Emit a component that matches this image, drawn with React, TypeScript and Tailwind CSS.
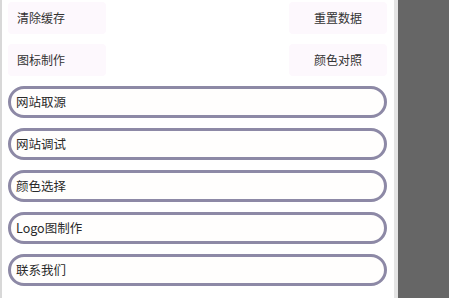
import React from "react";

const font = { fontFamily: '"Noto Sans CJK SC", "Noto Sans", sans-serif' };

function Btn({ label, left }: { label: string; left?: boolean }) {
  return (
    <div
      className={
        left
          ? "w-[98px] h-[32px] rounded-[4px] bg-[#fdf8fd] flex items-center justify-start pl-[9px] text-[12px] text-[#333]"
          : "w-[98px] h-[32px] rounded-[4px] bg-[#fdf8fd] flex items-center justify-center text-[12px] text-[#333]"
      }
    >
      {label}
    </div>
  );
}

function Pill({ label }: { label: string }) {
  return (
    <div className="h-[32px] rounded-full border-[3.5px] border-[#8d89a6] bg-[#fffefd] flex items-center pl-[5px] text-[12.5px] text-[#2a2a2a]">
      {label}
    </div>
  );
}

export default function App() {
  return (
    <div className="w-[449px] h-[298px] flex overflow-hidden bg-[#666666]" style={font}>
      <div className="w-[2px] bg-[#d8d8d8]" />
      <div className="w-[392px] bg-white pl-[6px] pr-[7px] pt-[2px] flex flex-col">
        <div className="flex justify-between">
          <Btn label="清除缓存" left />
          <Btn label="重置数据" />
        </div>
        <div className="flex justify-between mt-[10px]">
          <Btn label="图标制作" left />
          <Btn label="颜色对照" />
        </div>
        <div className="flex flex-col gap-[10px] mt-[10px]">
          <Pill label="网站取源" />
          <Pill label="网站调试" />
          <Pill label="颜色选择" />
          <Pill label="Logo图制作" />
          <Pill label="联系我们" />
        </div>
      </div>
      <div className="w-[4px] bg-[#e4e4e4]" />
      <div className="flex-1 bg-[#666666]" />
    </div>
  );
}
